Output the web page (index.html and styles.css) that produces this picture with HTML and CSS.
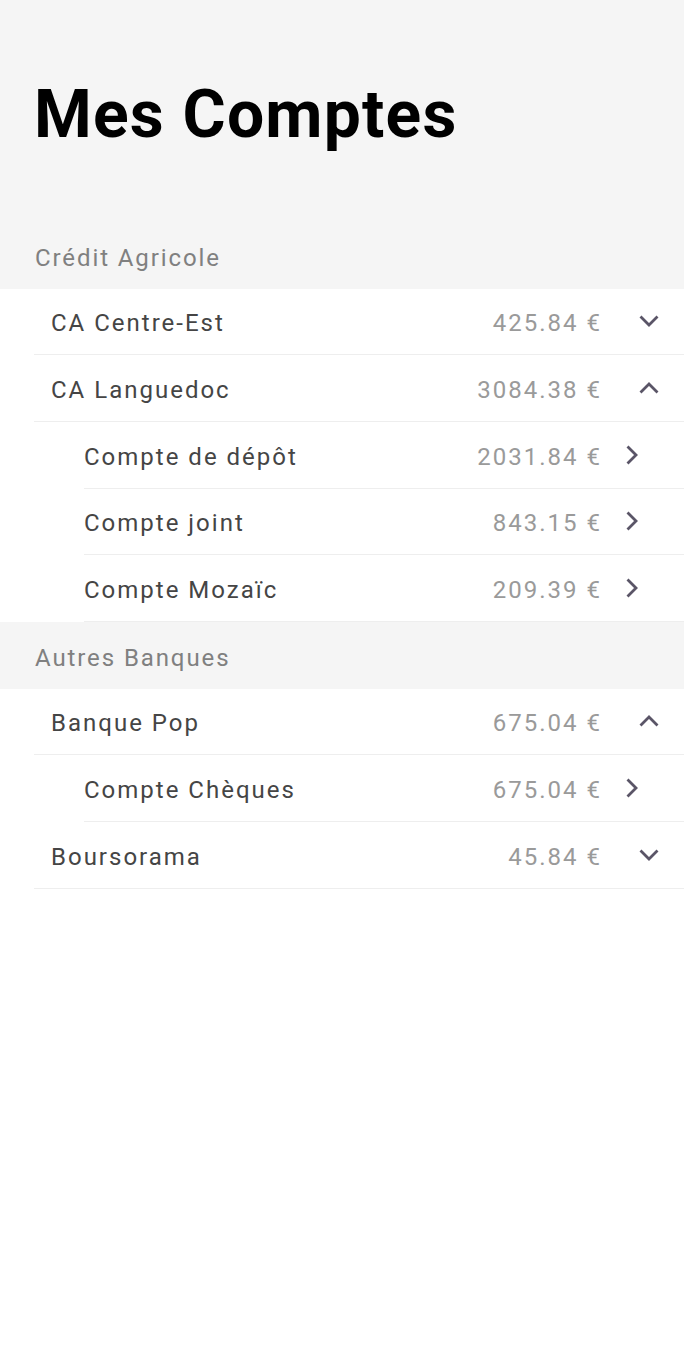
FILE: index.html
```html
<!DOCTYPE html>
<html lang="fr">
<head>
<meta charset="utf-8">
<link rel="stylesheet" href="styles.css">
<title>Mes Comptes</title>
</head>
<body>
<div class="app">
  <header class="top">
    <h1 class="title">Mes Comptes</h1>
  </header>

  <section class="group">
    <div class="group-head">Crédit Agricole</div>
    <div class="row bank">
      <span class="name">CA Centre-Est</span>
      <span class="amount">425.84 €</span>
      <span class="icon toggle"><svg width="20" height="12" viewBox="0 0 20 12"><path d="M1.5 1.5 L10 10 L18.5 1.5" fill="none" stroke="#5a5567" stroke-width="2.8"/></svg></span>
    </div>
    <div class="row bank">
      <span class="name">CA Languedoc</span>
      <span class="amount">3084.38 €</span>
      <span class="icon toggle"><svg width="20" height="12" viewBox="0 0 20 12"><path d="M1.5 10.5 L10 2 L18.5 10.5" fill="none" stroke="#5a5567" stroke-width="2.8"/></svg></span>
    </div>
    <div class="row sub">
      <span class="name">Compte de dépôt</span>
      <span class="amount">2031.84 €</span>
      <span class="icon go"><svg width="12" height="20" viewBox="0 0 12 20"><path d="M1.5 1.5 L10 10 L1.5 18.5" fill="none" stroke="#5a5567" stroke-width="2.8"/></svg></span>
    </div>
    <div class="row sub">
      <span class="name">Compte joint</span>
      <span class="amount">843.15 €</span>
      <span class="icon go"><svg width="12" height="20" viewBox="0 0 12 20"><path d="M1.5 1.5 L10 10 L1.5 18.5" fill="none" stroke="#5a5567" stroke-width="2.8"/></svg></span>
    </div>
    <div class="row sub">
      <span class="name">Compte Mozaïc</span>
      <span class="amount">209.39 €</span>
      <span class="icon go"><svg width="12" height="20" viewBox="0 0 12 20"><path d="M1.5 1.5 L10 10 L1.5 18.5" fill="none" stroke="#5a5567" stroke-width="2.8"/></svg></span>
    </div>
  </section>

  <section class="group">
    <div class="group-head">Autres Banques</div>
    <div class="row bank">
      <span class="name">Banque Pop</span>
      <span class="amount">675.04 €</span>
      <span class="icon toggle"><svg width="20" height="12" viewBox="0 0 20 12"><path d="M1.5 10.5 L10 2 L18.5 10.5" fill="none" stroke="#5a5567" stroke-width="2.8"/></svg></span>
    </div>
    <div class="row sub">
      <span class="name">Compte Chèques</span>
      <span class="amount">675.04 €</span>
      <span class="icon go"><svg width="12" height="20" viewBox="0 0 12 20"><path d="M1.5 1.5 L10 10 L1.5 18.5" fill="none" stroke="#5a5567" stroke-width="2.8"/></svg></span>
    </div>
    <div class="row bank">
      <span class="name">Boursorama</span>
      <span class="amount">45.84 €</span>
      <span class="icon toggle"><svg width="20" height="12" viewBox="0 0 20 12"><path d="M1.5 1.5 L10 10 L18.5 1.5" fill="none" stroke="#5a5567" stroke-width="2.8"/></svg></span>
    </div>
  </section>
</div>
</body>
</html>
```

FILE: styles.css
```css
* { box-sizing: border-box; }
html, body {
  margin: 0;
  padding: 0;
  background: #ffffff;
  font-family: Roboto, "Noto Sans", sans-serif;
}
.app {
  width: 684px;
  min-height: 1352px;
  background: #ffffff;
}
.top {
  background: #f5f5f5;
  height: 222px;
  padding: 77px 0 0 34px;
}
.title {
  margin: 0;
  font-size: 66px;
  font-weight: 700;
  line-height: 76px;
  color: #000;
  letter-spacing: 1.2px;
}
.group-head {
  background: #f5f5f5;
  height: 66.67px;
  display: flex;
  align-items: center;
  padding: 5px 0 0 35px;
  font-size: 24px;
  color: #808080;
  letter-spacing: 1.9px;
}
.row {
  height: 66.67px;
  display: flex;
  align-items: center;
  padding-top: 4px;
  border-bottom: 1.33px solid #eeeeee;
  font-size: 24px;
  letter-spacing: 2px;
}
.row.bank {
  margin-left: 34px;
  padding-left: 17px;
}
.row.sub {
  margin-left: 84px;
  padding-left: 0;
}
.name {
  flex: 1;
  color: #454545;
}
.amount {
  color: #9a9a9a;
  margin-right: -2px;
}
.icon {
  display: flex;
  align-items: center;
  width: 84px;
  height: 100%;
  margin-top: -4px;
}
.icon svg { display: block; }
.toggle { padding-left: 39px; }
.go { padding-left: 26px; }
```
